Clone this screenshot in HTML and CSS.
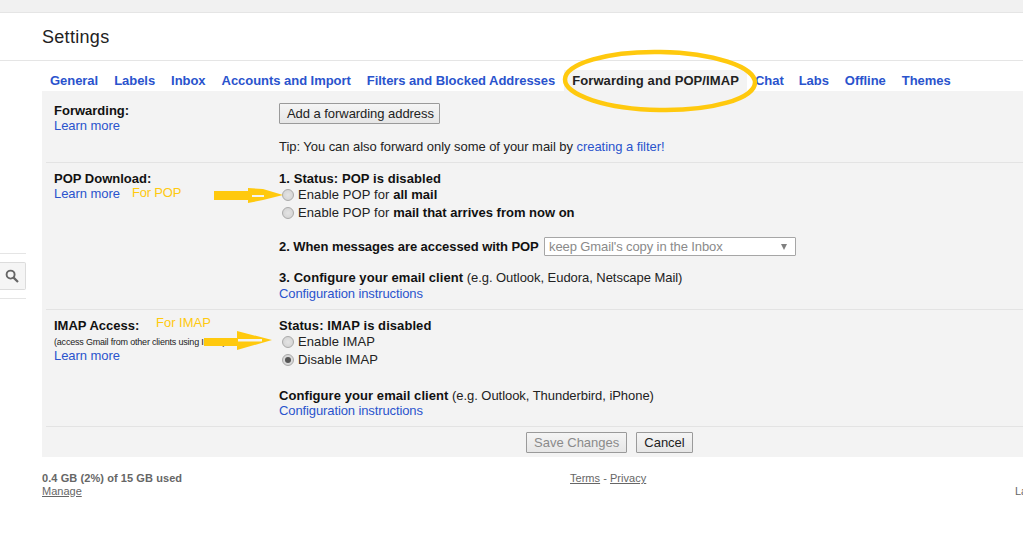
FILE: index.html
```html
<!DOCTYPE html>
<html lang="en">
<head>
<meta charset="utf-8">
<title>Settings</title>
<link rel="stylesheet" href="styles.css">
</head>
<body>
<div class="topbar"></div>
<header class="title-bar"><h1>Settings</h1></header>
<nav class="tabs">
  <a>General</a><a>Labels</a><a>Inbox</a><a>Accounts and Import</a><a>Filters and Blocked Addresses</a><a class="active">Forwarding and POP/IMAP</a><a>Chat</a><a>Labs</a><a>Offline</a><a>Themes</a>
</nav>
<main class="panel">
  <section class="row row-forward">
    <div class="label"><b>Forwarding:</b><a>Learn more</a></div>
    <div class="content">
      <button class="btn btn-add">Add a forwarding address</button>
      <p class="tip">Tip: You can also forward only some of your mail by <a>creating a filter!</a></p>
    </div>
  </section>
  <section class="row row-pop">
    <div class="label"><b>POP Download:</b><a>Learn more</a></div>
    <div class="content">
      <b class="line status">1. Status: POP is disabled</b>
      <div class="radio-line"><span class="radio"></span>Enable POP for&nbsp;<b>all mail</b></div>
      <div class="radio-line"><span class="radio"></span>Enable POP for&nbsp;<b>mail that arrives from now on</b></div>
      <div class="access"><b>2. When messages are accessed with POP</b>
        <div class="select"><span>keep Gmail's copy in the Inbox</span><i class="caret"></i></div>
      </div>
      <div class="line"><b>3. Configure your email client</b> (e.g. Outlook, Eudora, Netscape Mail)</div>
      <a class="line">Configuration instructions</a>
    </div>
  </section>
  <section class="row row-imap">
    <div class="label"><b>IMAP Access:</b><small>(access Gmail from other clients using IMAP)</small><a>Learn more</a></div>
    <div class="content">
      <b class="line status">Status: IMAP is disabled</b>
      <div class="radio-line"><span class="radio"></span>Enable IMAP</div>
      <div class="radio-line"><span class="radio checked"></span>Disable IMAP</div>
      <div class="line configure"><b>Configure your email client</b> (e.g. Outlook, Thunderbird, iPhone)</div>
      <a class="line">Configuration instructions</a>
    </div>
  </section>
  <div class="actions">
    <button class="btn disabled">Save Changes</button>
    <button class="btn">Cancel</button>
  </div>
</main>
<footer class="footer">
  <div class="usage"><b>0.4 GB (2%) of 15 GB used</b><a>Manage</a></div>
  <div class="legal"><a>Terms</a> - <a>Privacy</a></div>
  <div class="last">La</div>
</footer>

<aside class="side-search">
  <span class="search-btn">
    <svg width="14" height="14" viewBox="0 0 14 14"><circle cx="5.6" cy="5.6" r="4" fill="none" stroke="#666" stroke-width="1.9"/><path d="M8.6 8.6 13 13" stroke="#666" stroke-width="2.2"/></svg>
  </span>
</aside>

<span class="note note-pop">For POP</span>
<span class="note note-imap">For IMAP</span>
<svg class="mark" width="1023" height="537" viewBox="0 0 1023 537" aria-hidden="true">
  <ellipse cx="660" cy="81" rx="95" ry="29" fill="none" stroke="#ffc90e" stroke-width="4.500" transform="rotate(1 660 81)"/>
  <path d="M214 191H248V188L263 189 283 195 263 200 248 203V200H214Z" fill="#ffc90e"/>
  <path d="M252 195H264V197H252Z" fill="#f3f3f3"/>
  <path d="M204 338H237V331L272 340 237 350V346H204Z" fill="#ffc90e"/>
  <path d="M238 339H262V341.500H238Z" fill="#f3f3f3"/>
</svg>
</body>
</html>
```
FILE: styles.css
```css
* { box-sizing: border-box; }
html, body { margin: 0; padding: 0; }
body {
  position: relative;
  width: 1023px;
  height: 537px;
  overflow: hidden;
  background: #fff;
  color: #222;
  font: 13px/16px "Liberation Sans", Arial, sans-serif;
}
a { color: #2a53cd; }
b { color: #111; font-weight: 700; }
.topbar { height: 13px; background: #f1f1f1; border-bottom: 1px solid #e5e5e5; }
.title-bar { height: 48px; padding-left: 42px; border-bottom: 1px solid #e5e5e5; }
.title-bar h1 { margin: 0; font-size: 18px; font-weight: 400; line-height: 48px; letter-spacing: .3px; color: #222; }
.tabs { display: flex; height: 30px; padding-left: 42px; font-weight: 700; line-height: 39px; letter-spacing: -.04px; }
.tabs a { padding: 0 8px; color: #2a53cd; white-space: nowrap; }
.tabs .active { color: #222; background: #f3f3f3; margin: 9px 0 0 1px; line-height: 21px; height: 21px; letter-spacing: .09px; }
.tabs .active + a { padding-right: 7px; }
.panel { margin-left: 42px; background: #f3f3f3; height: 366px; padding-left: 4px; }
.row { display: flex; border-bottom: 1px solid #e3e3e3; padding-left: 8px; }
.row-forward { height: 72px; padding-top: 12px; }
.row-pop { height: 147px; padding-top: 8px; }
.row-imap { height: 117px; padding-top: 8px; }
.label { width: 225px; flex: none; display: flex; flex-direction: column; align-items: flex-start; }
.label a { line-height: 14px; letter-spacing: -.06px; }
.label small { font-size: 9px; line-height: 13px; margin-top: 2px; white-space: nowrap; letter-spacing: -.2px; color: #222; }
.content { flex: 1; min-width: 0; letter-spacing: -.05px; }
.line { display: block; }
.line b, b.line { letter-spacing: .07px; }
a.line { letter-spacing: -.11px; line-height: 15px; }
.status { height: 15px; }
.btn {
  font: inherit;
  color: #222;
  height: 21px;
  padding: 0 7px;
  white-space: nowrap;
  background: linear-gradient(#f5f5f5, #e6e6e6);
  border: 1px solid #9a9a9a;
  border-radius: 1px;
}
.btn-add { display: block; margin-bottom: 15px; width: 161px; letter-spacing: -.05px; }
.tip { margin: 0; }
.radio-line { display: flex; align-items: center; height: 18px; letter-spacing: .1px; }
.radio-line b { letter-spacing: 0; }
.radio {
  width: 12px; height: 12px; margin: 0 4.500px 0 2.500px; flex: none;
  border: 1px solid #aaa; border-radius: 50%;
  background: radial-gradient(circle, #e4e4e4, #d0d0d0);
  position: relative;
}
.radio.checked::after {
  content: ""; position: absolute; left: 2px; top: 2px; width: 6px; height: 6px;
  border-radius: 50%; background: #555;
}
.access { display: flex; align-items: center; gap: 5px; margin-top: 15px; margin-bottom: 14px; height: 19px; }
.access > b { letter-spacing: -.07px; width: 260px; white-space: nowrap; flex: none; }
.select {
  width: 252px; height: 19px; padding: 0 8px 0 4px; flex: none;
  display: flex; align-items: center; justify-content: space-between; letter-spacing: -.1px;
  background: #fff; border: 1px solid #a6a6a6; border-radius: 1px; color: #8a8a8a;
}
.caret { width: 0; height: 0; border: 3.5px solid transparent; border-top: 6px solid #808080; border-bottom: 0; }
.configure { margin: 19px 0 -1px; }
.actions { display: flex; gap: 9px; padding: 5px 0 0 480px; }
.actions .btn { padding: 0 7px; }
.actions .btn:last-child { width: 57px; }
.actions .btn:first-child { width: 101px; }
.btn.disabled { color: #8a8a8a; }
.footer { display: flex; margin-left: 42px; padding-top: 15px; font-size: 11px; line-height: 13px; color: #666; }
.footer a { color: #666; text-decoration: underline; }
.footer b { color: #666; letter-spacing: .08px; }
.usage { display: flex; flex-direction: column; align-items: flex-start; width: 528px; flex: none; }
.legal { flex: none; width: 445px; letter-spacing: .03px; }
.last { color: #666; padding-top: 13px; }
.side-search {
  position: absolute; left: 0; top: 253px; width: 26px; height: 46px;
  border-top: 1px solid #e5e5e5; border-bottom: 1px solid #e5e5e5;
  display: flex; align-items: center;
}
.search-btn {
  width: 26px; height: 28px; display: flex; align-items: center; justify-content: flex-end;
  padding-right: 6px; background: #f5f5f5; border: 1px solid #dcdcdc; border-left: 0; border-radius: 0 2px 2px 0;
}
.note { position: absolute; color: #ffc90e; font-size: 13px; line-height: 16px; }
.note-pop { left: 132px; top: 185px; letter-spacing: -.2px; }
.note-imap { left: 156px; top: 315px; }
.mark { position: absolute; left: 0; top: 0; pointer-events: none; }
```
